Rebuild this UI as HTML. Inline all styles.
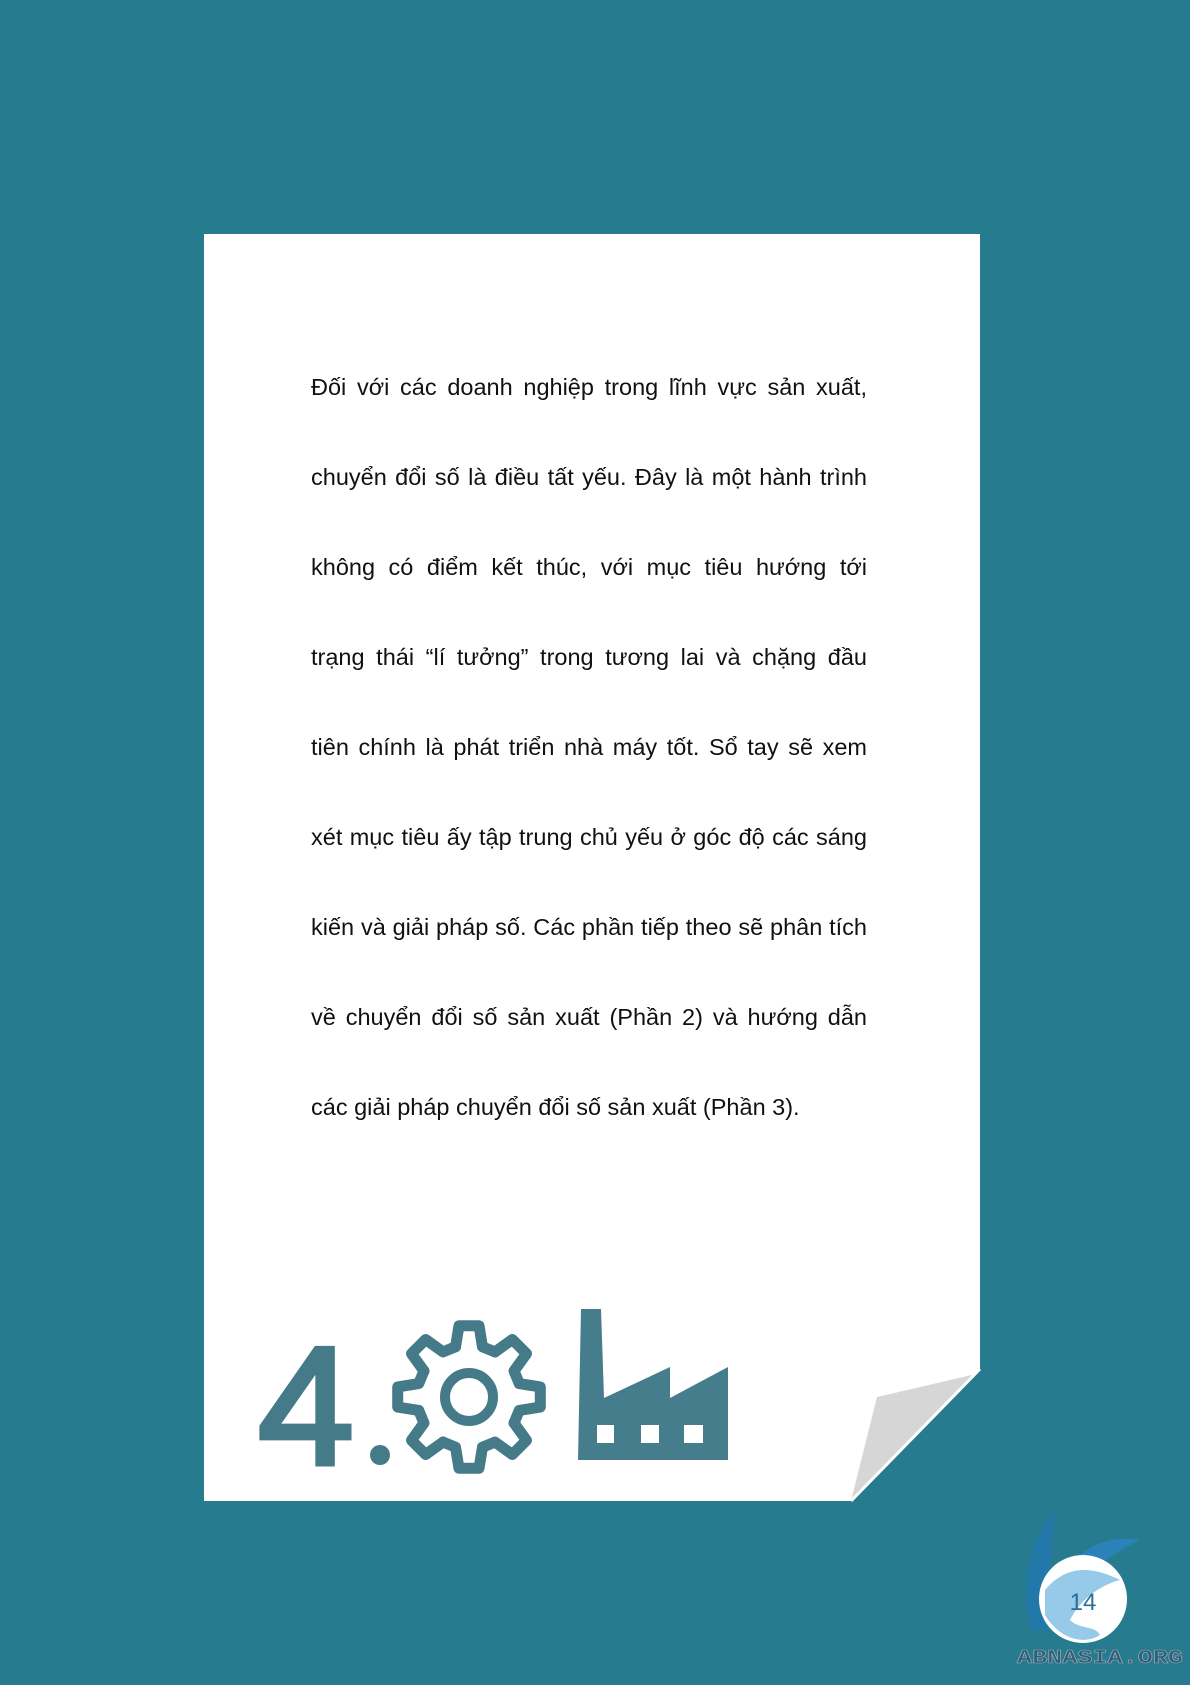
<!DOCTYPE html>
<html><head><meta charset="utf-8"><style>
html,body{margin:0;padding:0}
body{width:1190px;height:1685px;background:#277b8f;position:relative;overflow:hidden;font-family:"Liberation Sans",sans-serif}
svg{position:absolute;left:0;top:0}
.txt{position:absolute;left:311px;top:342px;width:556px;font-size:23.5px;color:#111}
.txt div{height:90px;line-height:90px;text-align:justify;text-align-last:justify;white-space:nowrap}
.txt div.last{text-align-last:left}
</style></head><body>
<svg width="1190" height="1685" viewBox="0 0 1190 1685">
<polygon points="204,234 980,234 980,1369 851,1501 204,1501" fill="#fff"/>
<polygon points="976,1374 877,1397 851,1501" fill="#d6d6d6"/>
<line x1="980" y1="1369" x2="851" y2="1501" stroke="#fff" stroke-width="3"/>
<!-- 4 -->
<text x="258" y="1464" font-family="Liberation Sans,sans-serif" font-size="168" fill="#457b89" stroke="#457b89" stroke-width="5" textLength="96" lengthAdjust="spacingAndGlyphs">4</text>
<circle cx="380" cy="1455" r="10" fill="#457b89"/>
<!-- gear -->
<g transform="translate(469,1397)" fill="none" stroke="#457b89" stroke-width="11" stroke-linejoin="round" stroke-linecap="round">
<g id="t"><polyline points="-13.46,-50.23 -10.02,-71.3 10.02,-71.3 13.46,-50.23 26,-45.04"/></g>
<use href="#t" transform="rotate(45)"/><use href="#t" transform="rotate(90)"/><use href="#t" transform="rotate(135)"/>
<use href="#t" transform="rotate(180)"/><use href="#t" transform="rotate(225)"/><use href="#t" transform="rotate(270)"/><use href="#t" transform="rotate(315)"/>
<circle r="24" stroke-width="10"/>
</g>
<!-- factory -->
<path d="M578,1460 L581,1309 L601,1309 L604,1398 L670,1367 L670,1398 L728,1367 L728,1460 Z" fill="#457d8c"/>
<rect x="597" y="1425" width="17" height="18" fill="#fff"/>
<rect x="641" y="1425" width="18" height="18" fill="#fff"/>
<rect x="684" y="1425" width="19" height="18" fill="#fff"/>
<!-- logo -->
<path d="M1030,1630 C1020,1580 1030,1540 1055,1512 C1050,1560 1048,1600 1050,1630 Z" fill="#1f77b4" opacity="0.7"/>
<path d="M1060,1580 C1080,1545 1110,1535 1140,1540 C1110,1555 1090,1570 1070,1590 Z" fill="#2a86c4" opacity="0.8"/>
<circle cx="1083" cy="1599" r="44" fill="#fff"/>
<path d="M1045,1590 C1070,1560 1100,1570 1120,1580 C1100,1585 1080,1600 1070,1620 C1080,1630 1095,1625 1100,1635 C1085,1645 1060,1640 1045,1615 Z" fill="#8cc3e6" opacity="0.9"/>
<text x="1083" y="1610" text-anchor="middle" font-family="Liberation Sans,sans-serif" font-size="24" fill="#2a6f96">14</text>
<text x="1100" y="1663" text-anchor="middle" font-family="Liberation Mono,monospace" font-weight="bold" font-size="19" fill="#2f5d74" stroke="#9ab" stroke-width="0.6" textLength="166" lengthAdjust="spacingAndGlyphs">ABNASIA.ORG</text>
</svg>
<div class="txt">
<div>Đối với các doanh nghiệp trong lĩnh vực sản xuất,</div>
<div>chuyển đổi số là điều tất yếu. Đây là một hành trình</div>
<div>không có điểm kết thúc, với mục tiêu hướng tới</div>
<div>trạng thái “lí tưởng” trong tương lai và chặng đầu</div>
<div>tiên chính là phát triển nhà máy tốt. Sổ tay sẽ xem</div>
<div>xét mục tiêu ấy tập trung chủ yếu ở góc độ các sáng</div>
<div>kiến và giải pháp số. Các phần tiếp theo sẽ phân tích</div>
<div>về chuyển đổi số sản xuất (Phần 2) và hướng dẫn</div>
<div class="last">các giải pháp chuyển đổi số sản xuất (Phần 3).</div>
</div>
</body></html>
